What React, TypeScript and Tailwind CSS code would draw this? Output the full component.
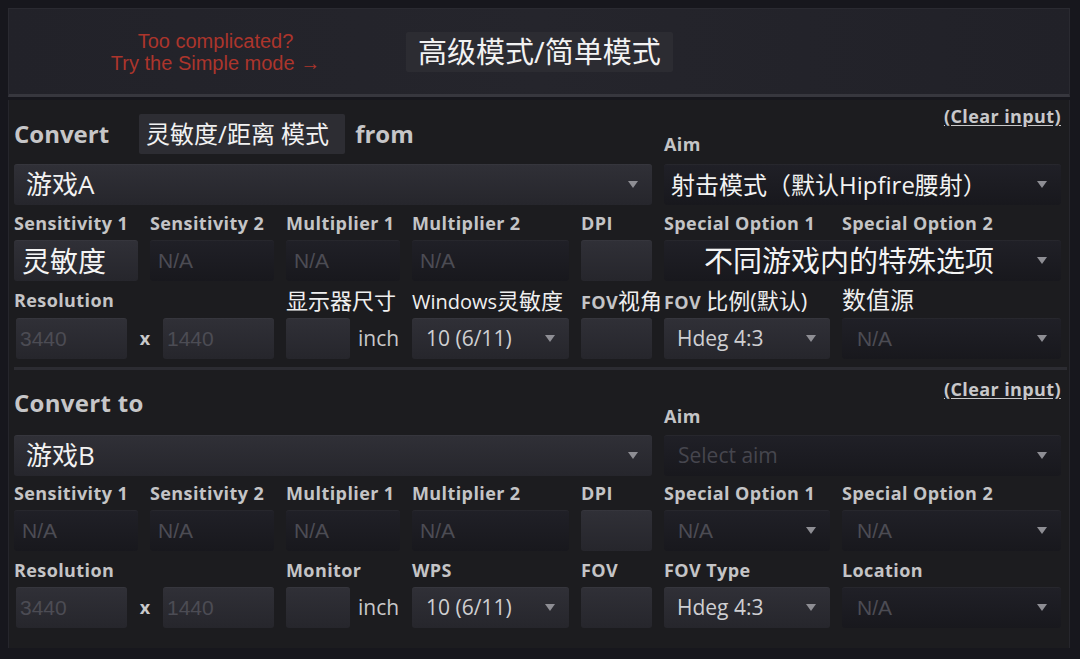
import React from "react";

const font = "font-['Open_Sans','Noto_Sans_CJK_SC',sans-serif]";
const cols = "grid grid-cols-[124px_124px_114px_157px_71px_166px_219px] gap-x-3";

function Arrow() {
  return (
    <svg width="10" height="7" viewBox="0 0 10 7" className="shrink-0">
      <path d="M0 0h10L5 7z" fill="#8e8e94" />
    </svg>
  );
}

function Label({ children }: { children: React.ReactNode }) {
  return (
    <div className="h-5 whitespace-nowrap text-[18px] leading-5 font-bold tracking-[0.4px] text-[#c4c4c6]">
      {children}
    </div>
  );
}

function Cjk({ children, big }: { children: React.ReactNode; big?: boolean }) {
  return (
    <span className={`${big ? "text-[24px]" : "text-[22px]"} font-normal tracking-normal text-[#efefef]`}>
      {children}
    </span>
  );
}

interface BoxProps {
  children?: React.ReactNode;
  dim?: boolean;
  className?: string;
  pad?: string;
}

function Box({ children, dim, className = "" }: BoxProps) {
  return (
    <div
      className={`${
        dim
          ? "bg-linear-to-b from-[#202027] to-[#18181d]"
          : "bg-linear-to-b from-[#303037] to-[#26262c]"
      } flex items-center rounded-[3px] shadow-[inset_0_1px_0_rgba(255,255,255,0.03)] h-[41px] overflow-hidden whitespace-nowrap ${className}`}
    >
      {children}
    </div>
  );
}

function Select({ children, dim, className = "", pad = "pl-3" }: BoxProps) {
  return (
    <Box dim={dim} className={`justify-between ${pad} pr-[14px] ${className}`}>
      <div className="flex items-center">{children}</div>
      <Arrow />
    </Box>
  );
}

const Placeholder = ({ children }: { children: React.ReactNode }) => (
  <span className="font-['Liberation_Sans',sans-serif] text-[21px] text-[#4c4c54]">{children}</span>
);

const Value = ({ children }: { children: React.ReactNode }) => (
  <span className="text-[21px] text-[#cfcfd2]">{children}</span>
);

function ClearInput() {
  return (
    <div className="self-end h-5 text-[18px] leading-5 font-bold tracking-[0.4px] text-[#c8c8ca] underline underline-offset-2">
      (Clear input)
    </div>
  );
}

export default function App() {
  return (
    <div className={`${font} w-[1080px] h-[659px] overflow-hidden bg-[#17171d] pt-2 pl-2 pr-[10px]`}>
      {/* top bar */}
      <div className="h-[89px] flex items-center bg-linear-to-r from-[#222229] via-[#25252c] to-[#212128] border border-[#2a2a31] border-b-[3px] border-b-[#37373e]">
        <div className="w-[397px] pl-4 flex flex-col items-center font-['Liberation_Sans',sans-serif] text-[20px] leading-[22px] text-[#ac352c]">
          <span>Too complicated?</span>
          <span>Try the Simple mode →</span>
        </div>
        <div className="h-10 px-3 flex items-center bg-[#2c2c32] text-[29px] text-[#f2f2f2] rounded-[2px]">
          高级模式/简单模式
        </div>
      </div>

      {/* main panel */}
      <div className="mt-[3px] h-[548px] bg-[#1c1c1f] border-l border-r border-[#26262c] pl-[5px] pt-[6px]">
        {/* section 1 */}
        <div className={`${cols} h-[58px]`}>
          <div className="col-span-5 flex items-center pt-2 self-start">
            <span className="text-[24px] leading-10 font-bold text-[#c6c6c8] mr-[30px]">Convert</span>
            <div className="h-10 pl-[7px] pr-[16px] flex items-center bg-[#2d2d33] rounded-[2px] text-[24px] text-[#f2f2f2]">
              灵敏度/距离 模式
            </div>
            <span className="ml-[10px] text-[24px] leading-10 font-bold text-[#c6c6c8]">from</span>
          </div>
          <div className="col-span-2 flex flex-col">
            <ClearInput />
            <div className="mt-2">
              <Label>Aim</Label>
            </div>
          </div>
        </div>
        <div className={cols}>
          <Select className="col-span-5">
            <span className="text-[26px] text-[#f2f2f2]">游戏A</span>
          </Select>
          <Select dim className="col-span-2" pad="pl-[7px]">
            <span className="text-[24px] text-[#f2f2f2]">射击模式（默认Hipfire腰射）</span>
          </Select>
        </div>
        <div className={`${cols} mt-2`}>
          <Label>Sensitivity 1</Label>
          <Label>Sensitivity 2</Label>
          <Label>Multiplier 1</Label>
          <Label>Multiplier 2</Label>
          <Label>DPI</Label>
          <Label>Special Option 1</Label>
          <Label>Special Option 2</Label>
        </div>
        <div className={`${cols} mt-[7px]`}>
          <Box className="pl-2">
            <span className="text-[28px] text-[#f4f4f4]">灵敏度</span>
          </Box>
          <Box dim className="pl-2"><Placeholder>N/A</Placeholder></Box>
          <Box dim className="pl-2"><Placeholder>N/A</Placeholder></Box>
          <Box dim className="pl-2"><Placeholder>N/A</Placeholder></Box>
          <Box />
          <Select dim className="col-span-2" pad="pl-10">
            <span className="text-[29px] text-[#f4f4f4]">不同游戏内的特殊选项</span>
          </Select>
        </div>
        <div className={`${cols} mt-[9px]`}>
          <div className="col-span-2"><Label>Resolution</Label></div>
          <Label><Cjk>显示器尺寸</Cjk></Label>
          <Label>
            <span className="text-[20px] font-normal tracking-normal text-[#efefef]">Windows</span>
            <Cjk>灵敏度</Cjk>
          </Label>
          <Label>FOV<Cjk>视角</Cjk></Label>
          <Label>FOV <Cjk>比例(默认)</Cjk></Label>
          <Label><Cjk big>数值源</Cjk></Label>
        </div>
        <div className={`${cols} mt-2`}>
          <div className="col-span-2 flex items-center">
            <Box className="w-[111px] ml-[2px] pl-1"><Placeholder>3440</Placeholder></Box>
            <span className="flex-1 text-center text-[18px] font-bold text-[#c8c8ca]">x</span>
            <Box className="w-[111px] pl-1"><Placeholder>1440</Placeholder></Box>
          </div>
          <div className="flex items-center">
            <Box className="w-[64px]" />
            <span className="ml-2 text-[21px] text-[#c8c8ca]">inch</span>
          </div>
          <Select pad="pl-[14px]"><Value>10 (6/11)</Value></Select>
          <Box />
          <Select pad="pl-[13px]"><Value>Hdeg 4:3</Value></Select>
          <Select dim pad="pl-[15px]"><Placeholder>N/A</Placeholder></Select>
        </div>

        {/* divider */}
        <div className="mt-2 mr-[2px] border-t-[3px] border-[#2c2c32]" />

        {/* section 2 */}
        <div className={`${cols} h-[65px]`}>
          <div className="col-span-5 pt-[19px]">
            <span className="text-[24px] leading-7 font-bold tracking-[0.3px] text-[#c6c6c8]">Convert to</span>
          </div>
          <div className="col-span-2 flex flex-col pt-[9px]">
            <ClearInput />
            <div className="mt-[7px]">
              <Label>Aim</Label>
            </div>
          </div>
        </div>
        <div className={cols}>
          <Select className="col-span-5">
            <span className="text-[26px] text-[#f2f2f2]">游戏B</span>
          </Select>
          <Select dim className="col-span-2" pad="pl-[14px]">
            <span className="text-[21px] text-[#46464e]">Select aim</span>
          </Select>
        </div>
        <div className={`${cols} mt-[7px]`}>
          <Label>Sensitivity 1</Label>
          <Label>Sensitivity 2</Label>
          <Label>Multiplier 1</Label>
          <Label>Multiplier 2</Label>
          <Label>DPI</Label>
          <Label>Special Option 1</Label>
          <Label>Special Option 2</Label>
        </div>
        <div className={`${cols} mt-[7px]`}>
          <Box dim className="pl-2"><Placeholder>N/A</Placeholder></Box>
          <Box dim className="pl-2"><Placeholder>N/A</Placeholder></Box>
          <Box dim className="pl-2"><Placeholder>N/A</Placeholder></Box>
          <Box dim className="pl-2"><Placeholder>N/A</Placeholder></Box>
          <Box />
          <Select dim pad="pl-[14px]"><Placeholder>N/A</Placeholder></Select>
          <Select dim pad="pl-[15px]"><Placeholder>N/A</Placeholder></Select>
        </div>
        <div className={`${cols} mt-[9px]`}>
          <div className="col-span-2"><Label>Resolution</Label></div>
          <Label>Monitor</Label>
          <Label>WPS</Label>
          <Label>FOV</Label>
          <Label>FOV Type</Label>
          <Label>Location</Label>
        </div>
        <div className={`${cols} mt-[7px]`}>
          <div className="col-span-2 flex items-center">
            <Box className="w-[111px] ml-[2px] pl-1"><Placeholder>3440</Placeholder></Box>
            <span className="flex-1 text-center text-[18px] font-bold text-[#c8c8ca]">x</span>
            <Box className="w-[111px] pl-1"><Placeholder>1440</Placeholder></Box>
          </div>
          <div className="flex items-center">
            <Box className="w-[64px]" />
            <span className="ml-2 text-[21px] text-[#c8c8ca]">inch</span>
          </div>
          <Select pad="pl-[14px]"><Value>10 (6/11)</Value></Select>
          <Box />
          <Select pad="pl-[13px]"><Value>Hdeg 4:3</Value></Select>
          <Select dim pad="pl-[15px]"><Placeholder>N/A</Placeholder></Select>
        </div>
      </div>
    </div>
  );
}
